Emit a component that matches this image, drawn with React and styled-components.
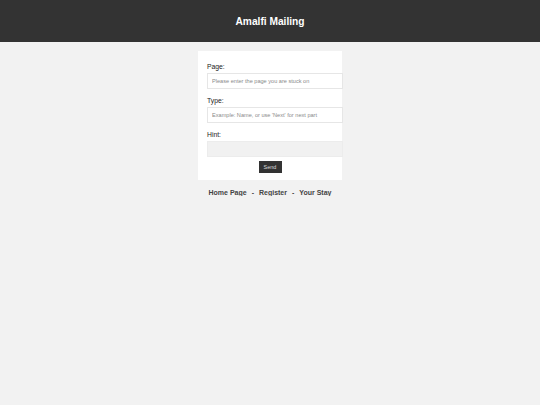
import React from "react";
import styled, { createGlobalStyle } from "styled-components";

const Global = createGlobalStyle`
  html, body { margin: 0; padding: 0; background: #f2f2f2; }
  body { font-family: "Liberation Sans", Arial, Helvetica, sans-serif; }
`;

const Header = styled.header`
  height: 42px;
  background: #333333;
  display: flex;
  align-items: center;
  justify-content: center;
`;

const Title = styled.h1`
  margin: 0;
  color: #ffffff;
  font-size: 10.2px;
  font-weight: bold;
`;

const Card = styled.form`
  box-sizing: border-box;
  width: 144px;
  margin: 9px auto 0;
  background: #ffffff;
  padding: 9px 9px 7px;
  display: flex;
  flex-direction: column;
`;

const Label = styled.label`
  display: block;
  font-size: 6.8px;
  line-height: 8px;
  color: #222;
  margin: 3px 0 2px;
`;

const Input = styled.input`
  box-sizing: content-box;
  width: 100%;
  height: 14px;
  padding: 0 4px;
  margin: 0 0 5px;
  border: 1px solid ${(p) => (p.$muted ? "#ececec" : "#e6e6e6")};
  background: ${(p) => (p.$muted ? "#f1f1f1" : "#ffffff")};
  font-family: "Liberation Sans", Arial, sans-serif;
  font-size: 5.6px;
  color: #333;
  outline: none;
  &::placeholder { color: #8a8a8a; }
`;

const Button = styled.button`
  align-self: center;
  width: 23px;
  height: 12px;
  margin-top: -1px;
  padding: 0;
  border: none;
  background: #333333;
  color: #dddddd;
  font-family: "Liberation Sans", Arial, sans-serif;
  font-size: 5.5px;
`;

const Footer = styled.nav`
  display: flex;
  justify-content: center;
  align-items: center;
  margin-top: 9px;
  font-size: 7px;
  font-weight: bold;
  color: #444;
`;

const Link = styled.a`
  color: #444;
  text-decoration: none;
`;

const Sep = styled.span`
  padding: 0 5px;
`;

export default function App() {
  return (
    <>
      <Global />
      <Header>
        <Title>Amalfi Mailing</Title>
      </Header>
      <Card onSubmit={(e) => e.preventDefault()}>
        <Label>Page:</Label>
        <Input placeholder="Please enter the page you are stuck on" />
        <Label>Type:</Label>
        <Input placeholder="Example: Name, or use 'Next' for next part" />
        <Label>Hint:</Label>
        <Input $muted readOnly />
        <Button type="submit">Send</Button>
      </Card>
      <Footer>
        <Link href="#">Home Page</Link>
        <Sep>-</Sep>
        <Link href="#">Register</Link>
        <Sep>-</Sep>
        <Link href="#">Your Stay</Link>
      </Footer>
    </>
  );
}
